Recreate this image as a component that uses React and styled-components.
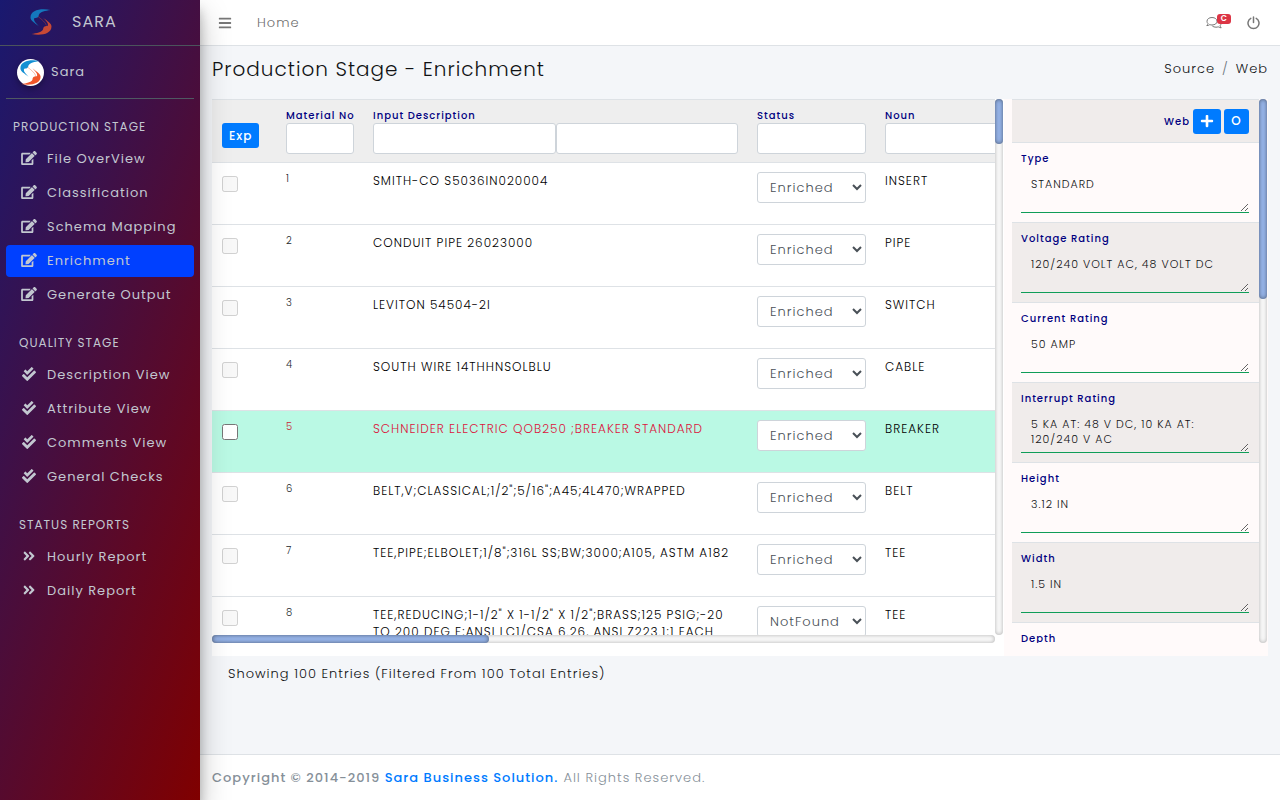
import React, { useEffect, useRef, useState } from 'react'
import styled, { createGlobalStyle } from 'styled-components'
import { FaEdit, FaCheckDouble, FaAngleDoubleRight, FaBars, FaPlus } from 'react-icons/fa'

const GlobalStyle = createGlobalStyle`
  *, *::before, *::after {
    box-sizing: border-box;
  }

  body {
    margin: 0;
    font-family: Poppins, Inter, sans-serif;
    font-size: 13px;
    font-weight: 300;
    line-height: 20px;
    letter-spacing: 1px;
    color: #101214;
    background: #f4f6f9;
  }

  button, input, select, textarea {
    font: inherit;
    letter-spacing: inherit;
  }

  a {
    color: inherit;
    text-decoration: none;
  }
`

const Layout = styled.div`
  display: grid;
  grid-template-columns: 200px minmax(0, 1fr);
  min-height: 100vh;
`

const Sidebar = styled.aside`
  z-index: 1;
  color: #c2c7d0;
  font-weight: 400;
  background: linear-gradient(110deg, #191970, #800000);
  box-shadow: 0 14px 28px rgba(0, 0, 0, 0.25), 0 10px 10px rgba(0, 0, 0, 0.22);
`

const Brand = styled.a`
  display: flex;
  align-items: center;
  gap: 18px;
  height: 46px;
  padding: 0 28px 2px;
  border-bottom: 1px solid #4b545c;
  font-size: 16px;

  svg {
    opacity: 0.8;
  }
`

const UserPanel = styled.div`
  display: flex;
  align-items: center;
  gap: 7px;
  height: 53px;
  margin: 0 6px;
  padding-left: 11px;
  border-bottom: 1px solid #4f5962;
`

const Avatar = styled.span`
  display: flex;
  align-items: center;
  justify-content: center;
  width: 27px;
  height: 27px;
  border-radius: 50%;
  background: #fff;
  box-shadow: 0 3px 6px rgba(0, 0, 0, 0.3);
`

const Nav = styled.nav`
  padding: 18px 6px;
`

const NavHeader = styled.h2`
  margin: 0;
  padding: 0 ${props => (props.$first ? '7px' : '13px')};
  font-size: 12px;
  font-weight: 400;
  line-height: 20px;
`

const NavList = styled.ul`
  display: flex;
  flex-direction: column;
  gap: 2px;
  margin: 6px 0 22px;
  padding: 0;
  list-style: none;
`

const NavItem = styled.a`
  display: flex;
  align-items: center;
  gap: 10px;
  height: 32px;
  padding-left: 15px;
  border-radius: 4px;
  background: ${props => (props.$active ? '#0040ff' : 'transparent')};

  svg {
    width: 16px;
    height: 14px;
    margin-bottom: 2px;
  }
`

const Main = styled.div`
  display: flex;
  flex-direction: column;
`

const TopBar = styled.header`
  display: flex;
  align-items: center;
  height: 46px;
  padding: 0 20px 0 18px;
  border-bottom: 1px solid #dee2e6;
  background: #fff;
  color: #6f6f6f;

  a {
    margin-left: 25px;
  }
`

const IconButton = styled.button`
  display: flex;
  position: relative;
  padding: 0;
  border: 0;
  background: none;
  color: #777;
`

const TopIcons = styled.div`
  display: flex;
  align-items: center;
  gap: 25px;
  margin-left: auto;
`

const Badge = styled.span`
  position: absolute;
  top: -2px;
  right: -9px;
  padding: 0 3px 0 4px;
  border-radius: 3px;
  background: #dc3545;
  color: #fff;
  font-size: 8px;
  font-weight: 600;
  line-height: 10px;
`

const PageHead = styled.div`
  display: flex;
  align-items: center;
  justify-content: space-between;
  height: 53px;
  padding: 0 12px 7px;
`

const Title = styled.h1`
  margin: 0;
  font-size: 20px;
  font-weight: 300;
  line-height: 28px;
`

const Crumbs = styled.div`
  display: flex;
  gap: 7px;

  span {
    color: #6c757d;
  }
`

const Panels = styled.div`
  display: grid;
  grid-template-columns: minmax(0, 3fr) minmax(0, 1fr);
  margin: 0 12px;
`

const TablePanel = styled.section`
  padding-bottom: 13px;
  background: #fff;
`

const AttributePanel = styled.section`
  padding: 0 0 13px 8px;
  background: #fffafa;
`

const ScrollFrame = styled.div`
  display: grid;
  grid-template-columns: minmax(0, 1fr) 8px;
  grid-template-rows: minmax(0, 1fr) ${props => (props.$horizontal ? '8px' : '')};
  height: 68vh;
  padding-right: 1px;
`

const Viewport = styled.div`
  overflow: auto;
  scrollbar-width: none;
`

const Track = styled.div`
  border-radius: 8px;
  background: #fafafa;
  box-shadow: inset 0 0 4px rgba(0, 0, 0, 0.3);
`

const Thumb = styled.div`
  height: 100%;
  border-radius: 8px;
  background: #97b5ea;
  box-shadow: inset 0 0 4px rgba(0, 0, 0, 0.5);
`

const Table = styled.table`
  width: 2213px;
  table-layout: fixed;
  border-spacing: 0;

  th, td {
    height: 62px;
    padding: 9px 9px 0 10px;
    border-top: 1px solid #dee2e6;
    text-align: left;
    vertical-align: top;
    font-size: 12px;
    font-weight: 300;
    line-height: 17px;
  }

  th {
    height: 63px;
    padding-top: 8px;
    background: #eee;
  }
`

const Row = styled.tr`
  background: ${props => (props.$selected ? '#baf9e4' : '#fff')};
  color: #000;
`

const ExpCell = styled.th`
  && {
    padding-top: 23px;
  }
`

const Blue = styled.button`
  display: inline-flex;
  align-items: center;
  justify-content: center;
  min-width: 25px;
  height: 25px;
  padding: 0 7px;
  border: 0;
  border-radius: 3px;
  background: #007bff;
  color: #fff;
  font-size: 12px;
  font-weight: 500;
`

const FieldLabel = styled.label`
  display: block;
  color: #000080;
  font-size: 10px;
  font-weight: 500;
  line-height: 15px;
  white-space: nowrap;
`

const Filters = styled.div`
  display: flex;
`

const Filter = styled.input`
  flex: 1;
  width: 0;
  height: 31px;
  border: 1px solid #ced4da;
  border-radius: 3px;
  background: #fff;
`

const NumberCell = styled.td`
  && {
    font-size: 10px;
    line-height: 14px;
    color: ${props => (props.$selected ? '#c82333' : '#212529')};
  }
`

const TextCell = styled.td`
  color: ${props => (props.$selected ? '#dc143c' : '#000')};
`

const Check = styled.input`
  display: block;
  width: 16px;
  height: 16px;
  margin: 4px 0 0;
`

const Status = styled.select`
  display: block;
  width: 100%;
  height: 31px;
  padding: 0 8px;
  border: 1px solid #ced4da;
  border-radius: 3px;
  background: #fff;
  color: #495057;
  font-size: 13px;
`

const PendingRows = styled.div`
  height: ${props => props.$height}px;
`

const WebBar = styled.div`
  display: flex;
  align-items: center;
  justify-content: flex-end;
  gap: 3px;
  height: 43px;
  padding: 0 10px;
  border-top: 1px solid #dee2e6;
  background: #f0eceb;
`

const Attribute = styled.div`
  height: 80px;
  padding: 8px 10px 0 9px;
  border-top: 1px solid #dee2e6;

  &:nth-child(odd) {
    background: #f0eceb;
  }
`

const AttributeText = styled.textarea`
  display: block;
  width: 100%;
  height: 46px;
  margin-top: 1px;
  padding: 10px 10px 4px;
  border: 0;
  border-bottom: 1px solid #0f9d58;
  background: transparent;
  color: #101214;
  font-size: 11px;
  line-height: 15px;
  overflow: hidden;
`

const Summary = styled.p`
  margin: 8px 28px 70px;
`

const Footer = styled.footer`
  display: flex;
  align-items: center;
  gap: 5px;
  height: 46px;
  margin-top: auto;
  padding: 0 12px;
  border-top: 1px solid #dee2e6;
  background: #fff;
  color: #869099;

  strong {
    font-weight: 500;
  }

  a {
    color: #007bff;
  }
`

const menu = [
  { title: 'PRODUCTION STAGE', icon: FaEdit, items: ['File OverView', 'Classification', 'Schema Mapping', 'Enrichment', 'Generate Output'] },
  { title: 'QUALITY STAGE', icon: FaCheckDouble, items: ['Description View', 'Attribute View', 'Comments View', 'General Checks'] },
  { title: 'STATUS REPORTS', icon: FaAngleDoubleRight, items: ['Hourly Report', 'Daily Report'] },
]

const materials = [
  ['SMITH-CO S5036IN020004', 'INSERT', 'Enriched'],
  ['CONDUIT PIPE 26023000', 'PIPE', 'Enriched'],
  ['LEVITON 54504-2I', 'SWITCH', 'Enriched'],
  ['SOUTH WIRE 14THHNSOLBLU', 'CABLE', 'Enriched'],
  ['SCHNEIDER ELECTRIC QOB250 ;BREAKER STANDARD', 'BREAKER', 'Enriched'],
  ['BELT,V;CLASSICAL;1/2";5/16";A45;4L470;WRAPPED', 'BELT', 'Enriched'],
  ['TEE,PIPE;ELBOLET;1/8";316L SS;BW;3000;A105, ASTM A182', 'TEE', 'Enriched'],
  ['TEE,REDUCING;1-1/2" X 1-1/2" X 1/2";BRASS;125 PSIG;-20 TO 200 DEG F;ANSI LC1/CSA 6.26, ANSI Z223.1;1 EACH', 'TEE', 'NotFound'],
]

const attributes = [
  ['Type', 'STANDARD'],
  ['Voltage Rating', '120/240 VOLT AC, 48 VOLT DC'],
  ['Current Rating', '50 AMP'],
  ['Interrupt Rating', '5 KA AT: 48 V DC, 10 KA AT: 120/240 V AC'],
  ['Height', '3.12 IN'],
  ['Width', '1.5 IN'],
  ['Depth', ''],
]

const SwirlLogo = ({ size }) => (
  <svg width={size} height={size} viewBox="0 0 26 26" aria-hidden="true">
    <path d="M22.500 1C13-1 2.500 1 2.500 8.500c0 3.500 4 5 8.500 9C7.500 13.500 5 11.500 6.500 9c3.500 0 4-1 4.500-3.500C12.500 2.800 17 1.800 22.500 1z" fill="#128fd3" />
    <path d="M10 7.500c4 3 7.500 6 8.500 9" fill="none" stroke="#f0562a" strokeWidth=".8" opacity=".5" />
    <path d="M3.500 25c9.500 2 20 0 20-7.500 0-3.500-4-5-8.500-9 3.500 4 6 6 4.500 8.500-3.500 0-4 1-4.500 3.500-1.500 2.700-6 3.700-11.500 4.500z" fill="#f0562a" />
  </svg>
)

const CommentsIcon = () => (
  <svg width="16" height="14" viewBox="0 0 16 14" fill="none" stroke="currentColor" strokeLinejoin="round" aria-hidden="true">
    <path d="M6 1.500c3 0 5 1.600 5 3.800S9 9 6 9c-.8 0-1.500-.1-2.200-.4-.8.7-1.800 1-3 1 .6-.6 1-1.300 1.200-2C1.300 7 1 6.200 1 5.300 1 3.100 3 1.500 6 1.500z" />
    <path d="M12.500 4.500c1.500.5 2.500 1.600 2.500 3 0 .9-.4 1.700-1 2.300.2.800.6 1.400 1.200 2-1.200 0-2.200-.4-3-1-.7.300-1.400.4-2.200.4-1.500 0-2.800-.4-3.700-1.200" />
  </svg>
)

const PowerIcon = () => (
  <svg width="13" height="14" viewBox="0 0 13 14" fill="none" stroke="currentColor" strokeWidth="1.500" strokeLinecap="round" aria-hidden="true">
    <path d="M3.800 2.300a5.500 5.500 0 1 0 5.400 0M6.500 1v5.500" />
  </svg>
)

const ScrollArea = ({ horizontal = false, children }) => {
  const viewport = useRef(null)
  const [bars, setBars] = useState({ size: 0, top: 0, width: 0, left: 0 })

  const measure = () => {
    const el = viewport.current
    setBars({
      size: (el.clientHeight / el.scrollHeight) * 100,
      top: (el.scrollTop / el.scrollHeight) * el.clientHeight,
      width: (el.clientWidth / el.scrollWidth) * 100,
      left: (el.scrollLeft / el.scrollWidth) * el.clientWidth,
    })
  }

  useEffect(() => {
    measure()
    window.addEventListener('resize', measure)
    return () => window.removeEventListener('resize', measure)
  }, [])

  return (
    <ScrollFrame $horizontal={horizontal}>
      <Viewport ref={viewport} onScroll={measure}>{children}</Viewport>
      <Track>
        <Thumb style={{ height: `${bars.size}%`, transform: `translateY(${bars.top}px)` }} />
      </Track>
      {horizontal && (
        <Track>
          <Thumb style={{ width: `${bars.width}%`, transform: `translateX(${bars.left}px)` }} />
        </Track>
      )}
    </ScrollFrame>
  )
}

const App = () => {
  return (
    <Layout>
      <GlobalStyle />
      <Sidebar>
        <Brand href="#">
          <SwirlLogo size={26} />
          SARA
        </Brand>
        <UserPanel>
          <Avatar><SwirlLogo size={25} /></Avatar>
          <a href="#">Sara</a>
        </UserPanel>
        <Nav>
          {menu.map(({ title, icon: Icon, items }, i) => (
            <React.Fragment key={title}>
              <NavHeader $first={i === 0}>{title}</NavHeader>
              <NavList>
                {items.map(item => (
                  <li key={item}>
                    <NavItem href="#" $active={item === 'Enrichment'}>
                      <Icon />
                      {item}
                    </NavItem>
                  </li>
                ))}
              </NavList>
            </React.Fragment>
          ))}
        </Nav>
      </Sidebar>

      <Main>
        <TopBar>
          <IconButton aria-label="Toggle menu"><FaBars size={14} /></IconButton>
          <a href="#">Home</a>
          <TopIcons>
            <IconButton aria-label="Messages">
              <CommentsIcon />
              <Badge>C</Badge>
            </IconButton>
            <IconButton aria-label="Log out"><PowerIcon /></IconButton>
          </TopIcons>
        </TopBar>

        <PageHead>
          <Title>Production Stage - Enrichment</Title>
          <Crumbs>
            <a href="#">Source</a>
            <span>/</span>
            <a href="#">Web</a>
          </Crumbs>
        </PageHead>

        <Panels>
          <TablePanel>
            <ScrollArea horizontal>
              <Table>
                <colgroup>
                  <col width="64" />
                  <col width="87" />
                  <col width="384" />
                  <col width="128" />
                  <col />
                </colgroup>
                <thead>
                  <tr>
                    <ExpCell><Blue>Exp</Blue></ExpCell>
                    <th>
                      <FieldLabel htmlFor="material">Material No</FieldLabel>
                      <Filters><Filter id="material" /></Filters>
                    </th>
                    <th>
                      <FieldLabel htmlFor="description">Input Description</FieldLabel>
                      <Filters>
                        <Filter id="description" />
                        <Filter aria-label="Input Description contains" />
                      </Filters>
                    </th>
                    <th>
                      <FieldLabel htmlFor="status">Status</FieldLabel>
                      <Filters><Filter id="status" /></Filters>
                    </th>
                    <th>
                      <FieldLabel htmlFor="noun">Noun</FieldLabel>
                      <Filters><Filter id="noun" /></Filters>
                    </th>
                  </tr>
                </thead>
                <tbody>
                  {materials.map(([description, noun, status], i) => {
                    const id = i + 1
                    const selected = id === 5
                    return (
                      <Row key={id} $selected={selected}>
                        <td><Check type="checkbox" disabled={!selected} aria-label={`Select row ${id}`} /></td>
                        <NumberCell $selected={selected}>{id}</NumberCell>
                        <TextCell $selected={selected}>{description}</TextCell>
                        <td>
                          <Status defaultValue={status} aria-label={`Status of row ${id}`}>
                            <option>Enriched</option>
                            <option>NotFound</option>
                          </Status>
                        </td>
                        <td>{noun}</td>
                      </Row>
                    )
                  })}
                </tbody>
              </Table>
              <PendingRows $height={92 * 64} />
            </ScrollArea>
          </TablePanel>

          <AttributePanel>
            <ScrollArea>
              <WebBar>
                <FieldLabel as="span">Web</FieldLabel>
                <Blue aria-label="Add"><FaPlus size={14} /></Blue>
                <Blue>O</Blue>
              </WebBar>
              {attributes.map(([name, value]) => (
                <Attribute key={name}>
                  <FieldLabel htmlFor={name}>{name}</FieldLabel>
                  <AttributeText id={name} defaultValue={value} />
                </Attribute>
              ))}
              <PendingRows $height={11 * 80} />
            </ScrollArea>
          </AttributePanel>
        </Panels>

        <Summary>Showing 100 Entries (Filtered From 100 Total Entries)</Summary>

        <Footer>
          <strong>Copyright © 2014-2019 <a href="#">Sara Business Solution.</a></strong>
          All Rights Reserved.
        </Footer>
      </Main>
    </Layout>
  )
}

export default App
